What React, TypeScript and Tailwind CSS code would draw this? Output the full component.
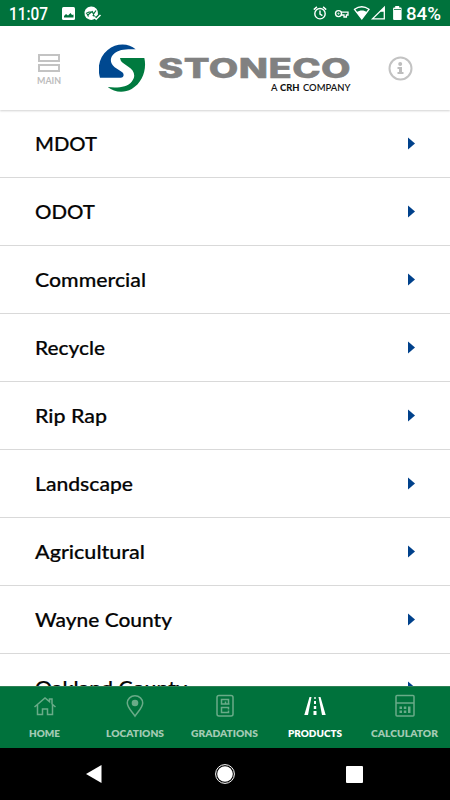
import React from "react";

const rows: { label: string; width: number }[] = [
  { label: "MDOT", width: 62 },
  { label: "ODOT", width: 60 },
  { label: "Commercial", width: 111 },
  { label: "Recycle", width: 70 },
  { label: "Rip Rap", width: 72 },
  { label: "Landscape", width: 98 },
  { label: "Agricultural", width: 110 },
  { label: "Wayne County", width: 137 },
  { label: "Oakland County", width: 152 },
];

/* Single-line label drawn to a fixed advance width. */
function Label({ text, width, size, height, weight, fill, baseline, family = "Lato, sans-serif", spacing = 0, stroke = 0 }: {
  text: string; width: number; size: number; height: number; weight: number; fill: string; baseline: number; family?: string; spacing?: number; stroke?: number;
}) {
  return (
    <svg width={width} height={height} className="block shrink-0 overflow-visible">
      <text x="0" y={baseline} textLength={width} lengthAdjust="spacingAndGlyphs" letterSpacing={spacing} fontFamily={family} fontSize={size} fontWeight={weight} fill={fill} stroke={stroke ? fill : "none"} strokeWidth={stroke}>{text}</text>
    </svg>
  );
}

function StatusBar() {
  return (
    <header className="flex h-[26px] shrink-0 items-center bg-[#00723c] text-white">
      <div className="ml-[9px] w-[53px]">
        <Label text="11:07" width={39} size={17.5} height={26} weight={500} fill="#fff" baseline={20} family="Roboto, sans-serif" />
      </div>
      <svg width="40" height="26" viewBox="62 0 40 26">
        <rect x="62" y="7" width="13" height="13" rx="1.5" fill="#fff" />
        <path d="M64 17.500V16l2-2 2 1.500 2.500-2.500 1.500 2 1.500-.5v3z" fill="#00723c" />
        <path d="M91 6.500a6.700 6.700 0 1 0 4.200 12l-2.800-3 1-1.200 2.400 2.400 2.200-2.200A6.800 6.800 0 0 0 91 6.500z" fill="#fff" />
        <path d="M86 13.500l3-1.500h2.500l-3 2.500h-1l1 2M92 11l1.500 3 2.500-3.500" stroke="#00723c" strokeWidth="1.200" fill="none" />
        <path d="M93.500 16.500l2.700 2.700 4.300-4.200" stroke="#fff" strokeWidth="1.500" fill="none" />
      </svg>
      <svg className="ml-auto" width="92" height="26" viewBox="312 0 92 26" fill="none" stroke="#fff">
        <circle cx="320" cy="13.700" r="5.200" strokeWidth="1.400" />
        <path d="M320 10.500v3.600l2.400 1.500M313.800 9.600l3.100-2.700M323.100 6.900l3.100 2.700" strokeWidth="1.400" />
        <circle cx="338.500" cy="13.600" r="3" strokeWidth="1.400" />
        <path d="M341 12.200h7v2.800h-1.600v2h-2.400v-2h-3" strokeWidth="1.300" />
        <circle cx="338.500" cy="13.600" r=".6" strokeWidth="1" />
        <path d="M354.500 9.300c4.500-3.200 10-3.200 14.500 0L361.800 19z" strokeWidth="1.300" />
        <path d="M356.500 12.300c3.500-2.300 7.500-2.300 10.600 0L361.800 19z" fill="#fff" stroke="none" />
        <path d="M384.300 7.300v11.600h-11.800z" strokeWidth="1.300" />
        <path d="M380.500 11.100l3.800-3.800v4.500h-3.800z" fill="#fff" stroke="none" />
        <path d="M395.200 6h4v1.500h1.400q1 0 1 1V19q0 1-1 1h-6.500q-1 0-1-1V8.500q0-1 1-1h1.100z" fill="#fff" stroke="none" />
        <path d="M394 9.500h7" stroke="#00723c" strokeWidth=".8" />
      </svg>
      <div className="ml-[2px] mr-[9px]">
        <Label text="84%" width={35} size={18} height={26} weight={500} fill="#fff" baseline={20} family="Roboto, sans-serif" />
      </div>
    </header>
  );
}

function BrandHeader() {
  return (
    <div className="relative z-10 flex h-[84px] shrink-0 items-start bg-white shadow-[0_1px_2px_rgba(0,0,0,0.18)]">
      <button className="ml-[37px] mt-[28px] flex w-[24px] flex-col items-center">
        <svg width="22" height="18" fill="none" stroke="#c3c3c3" strokeWidth="2">
          <rect x="1" y="1" width="20" height="6" />
          <rect x="1" y="11" width="20" height="6" />
        </svg>
        <span className="mt-[2px]"><Label text="MAIN" width={24} size={9.5} height={12} weight={700} fill="#bcbcbc" baseline={9.500} /></span>
      </button>
      <svg className="ml-[38px] mt-[18px]" width="47" height="49" viewBox="27 24 141 147">
        <path d="M137 40C115 20 78 21 53 42C28 63 21 94 30 125H92C101 125 104 115 97 109L74 94C59 82 59 64 72 53C87 40 108 39 137 40Z" fill="#004890" />
        <path d="M90 66H163C171 101 157 141 125 159C101 172 73 169 53 153C83 157 112 153 125 137C140 119 131 102 115 92L98 80Q91 75 90 66Z" fill="#007a3f" />
      </svg>
      <div className="ml-[12px] mt-[28px] w-[193px]">
        <Label text="STONECO" width={193} size={26.5} height={27} weight={800} fill="#818181" baseline={23.500} family="Inter, sans-serif" spacing={0.3} stroke={0.5} />
        <div className="flex justify-end gap-[3px] pr-[1px]">
          <Label text="A" width={6.500} size={9.500} height={14} weight={600} fill="#151515" baseline={10} />
          <Label text="CRH" width={19.500} size={9.500} height={14} weight={900} fill="#111111" baseline={10} />
          <Label text="COMPANY" width={47.500} size={9.500} height={14} weight={600} fill="#151515" baseline={10} />
        </div>
      </div>
      <svg className="ml-[37px] mt-[30px]" width="25" height="25" viewBox="0 0 25 25">
        <circle cx="12.500" cy="12.500" r="11" fill="none" stroke="#c3c3c3" strokeWidth="2" />
        <circle cx="12.200" cy="8" r="2" fill="#bdbdbd" />
        <path d="M9.500 11h4.500v5h1.500v2h-6v-2h1.500v-3H9.500z" fill="#bdbdbd" />
      </svg>
    </div>
  );
}

function NavIcon({ name }: { name: string }) {
  return (
    <svg width="26" height="26" viewBox="0 0 26 26" fill="none" stroke="currentColor" strokeWidth="1.500">
      {name === "HOME" && <path d="M2.500 14L13 5l4.500 3.700V6H20v5l3.500 3M5.500 12v9.500h5V16h5v5.500h5V12" />}
      {name === "LOCATIONS" && <><path d="M13 23.200C10 18.500 5.300 14.500 5.300 10a7.700 7.300 0 0 1 15.400 0C20.700 14.500 16 18.500 13 23.200z" /><circle cx="13" cy="10" r="3.300" fill="currentColor" stroke="none" /></>}
      {name === "GRADATIONS" && <><rect x="5" y="2.500" width="16" height="20.500" rx="2" /><path d="M9.500 6.500h7v4.500h-7zM13.500 8.500v2.500h4M16.500 16.500v-2H9.500v5h7v-2" /></>}
      {name === "PRODUCTS" && <g fill="currentColor" stroke="none"><path d="M7.500 4h2L6 22H2.300zM16.500 4h2l5.200 18H20zM12.300 4h1.400v2h-1.400zM12 8h2v3h-2zM11.800 13h2.400v3h-2.400zM11.500 18h3v4h-3z" /></g>}
      {name === "CALCULATOR" && <><rect x="4" y="2.500" width="18" height="20.500" rx="1" /><path d="M4 10h18" /><g fill="currentColor" stroke="none"><path d="M7.500 13.500H10V16H7.500zM11.800 13.500h2.500V16h-2.500zM16 13.500h2.500v6.500H16zM7.500 17.500H10V20H7.500zM11.800 17.500h2.500V20h-2.500z" /></g></>}
    </svg>
  );
}

const tabs: { name: string; width: number }[] = [
  { name: "HOME", width: 31 },
  { name: "LOCATIONS", width: 58 },
  { name: "GRADATIONS", width: 67 },
  { name: "PRODUCTS", width: 54 },
  { name: "CALCULATOR", width: 67 },
];

export default function App() {
  return (
    <div className="flex h-[800px] w-[450px] flex-col overflow-hidden bg-white">
      <StatusBar />
      <BrandHeader />
      <main className="min-h-0 flex-1 overflow-hidden">
        {rows.map((row) => (
          <div key={row.label} className="flex h-[68px] items-center justify-between border-b border-[#d9d9d9] pl-[35px] pr-[35px]">
            <Label text={row.label} width={row.width} size={20} height={26} weight={500} fill="#050505" baseline={20} stroke={0.2} />
            <svg className="mb-[1px]" width="7" height="13"><path d="M0 .5L7 6.500L0 12.500z" fill="#00418b" /></svg>
          </div>
        ))}
      </main>
      <nav className="grid h-[62px] shrink-0 grid-cols-5 border-t border-[#2f8055] bg-[#00723c]">
        {tabs.map((tab) => (
          <button key={tab.name} className={`flex flex-col items-center pr-[1px] pt-[6px] ${tab.name === "PRODUCTS" ? "text-white" : "text-[#69ab88]"}`}>
            <NavIcon name={tab.name} />
            <span className="mt-[7px]"><Label text={tab.name} width={tab.width} size={10} height={14} weight={800} fill={tab.name === "PRODUCTS" ? "#fff" : "#a2cab3"} baseline={11} /></span>
          </button>
        ))}
      </nav>
      <footer className="flex h-[52px] shrink-0 items-center bg-black">
        <svg className="ml-[85px]" width="18" height="20"><path d="M1 10L16.500 1v18z" fill="#fff" /></svg>
        <svg className="ml-[112px]" width="20" height="20"><circle cx="10" cy="10" r="9.400" fill="none" stroke="#fff" strokeWidth="1" /><circle cx="10" cy="10" r="7.800" fill="#fff" /></svg>
        <div className="ml-[111px] h-[17px] w-[17px] rounded-[1px] bg-white" />
      </footer>
    </div>
  );
}
